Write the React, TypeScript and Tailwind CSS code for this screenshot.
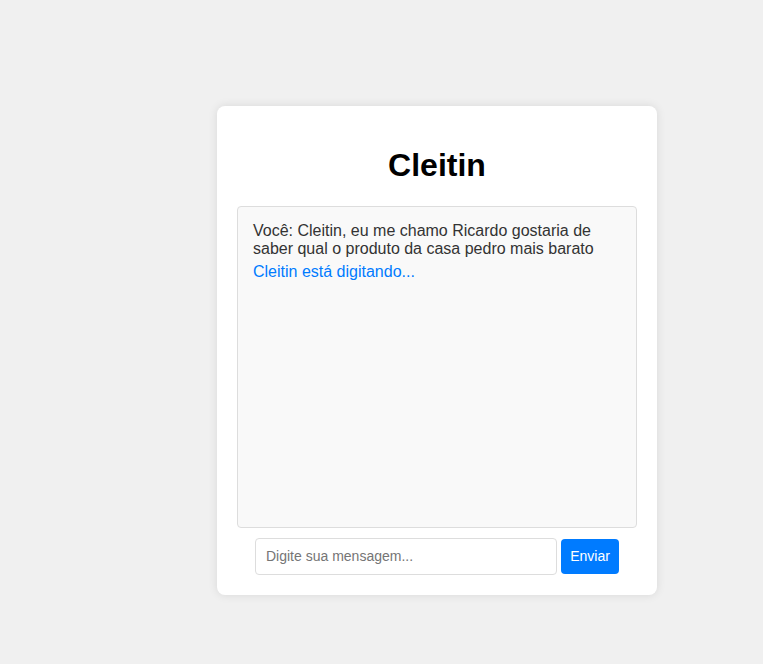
import React, { useState } from 'react';

export default function App() {
  const [text, setText] = useState('');

  return (
    <div className="min-h-[664px] bg-[#f0f0f0] pt-[106px] font-['Liberation_Sans',Arial,sans-serif]">
      <div className="ml-[217px] w-[440px] rounded-lg bg-white p-5 shadow-[0_0_10px_rgba(0,0,0,0.1)]">
        <h1 className="my-[21.44px] text-center text-[32px] leading-[37px] font-bold text-black">Cleitin</h1>

        {/* Chat box */}
        <div className="h-[322px] overflow-y-auto rounded border border-[#ddd] bg-[#f9f9f9] p-[10px] text-[16px] leading-[18px]">
          <div className="my-[5px] px-[5px] text-[#333]">
            Você: Cleitin, eu me chamo Ricardo gostaria de saber qual o produto da casa pedro mais barato
          </div>
          <div className="my-[5px] px-[5px] text-[#007bff]">Cleitin está digitando...</div>
        </div>

        <div className="mt-[10px] flex items-center justify-center gap-1">
          <input
            value={text}
            onChange={(e) => setText(e.target.value)}
            placeholder="Digite sua mensagem..."
            className="h-[37px] w-[302px] rounded border border-[#ddd] px-[10px] text-[14px] text-[#333] outline-none placeholder:text-[#757575]"
          />
          <button className="h-[35px] w-[58px] rounded bg-[#007bff] text-[14px] text-white">Enviar</button>
        </div>
      </div>
    </div>
  );
}
